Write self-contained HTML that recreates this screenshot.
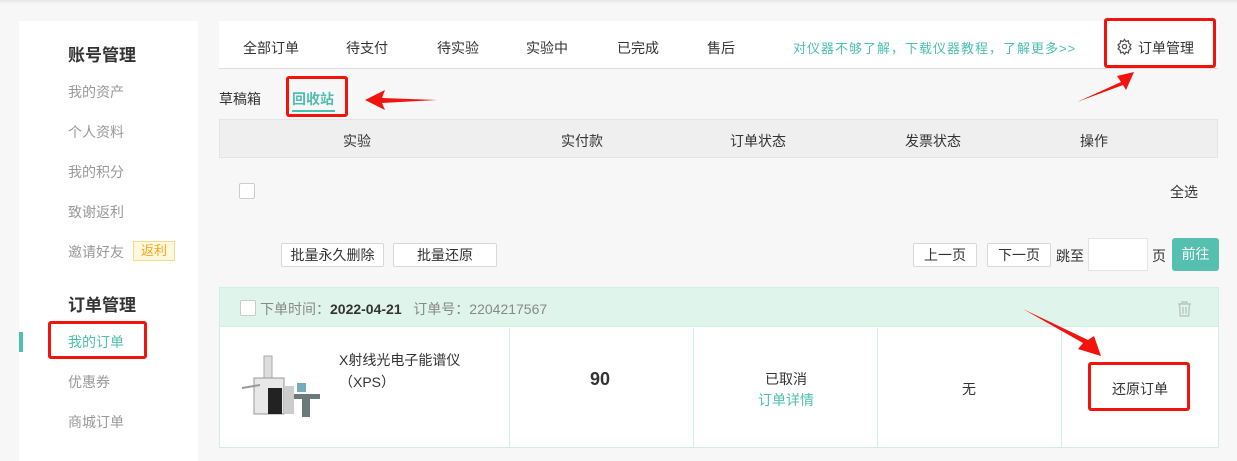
<!DOCTYPE html>
<html><head><meta charset="utf-8"><style>
*{margin:0;padding:0;box-sizing:border-box}
body{width:1237px;height:456px;overflow:hidden;background:#f7f7f7;font-family:"Liberation Sans","Noto Sans CJK SC",sans-serif;font-size:14px;color:#333;position:relative}
.a{position:absolute;white-space:nowrap}
.side{left:19px;top:21px;width:179px;height:440px;background:#fff}
.s{color:#999;font-size:14px;left:68px}
.h{font-size:17px;font-weight:bold;color:#333;left:68px}
.nav{left:219px;top:21px;width:999px;height:48px;background:#fff;border-bottom:1px solid #ddd}
.t{top:38px;font-size:14px;color:#333}
.teal{color:#4dbfb0}
.btn{border:1px solid #d8d8d8;background:#fff;border-radius:2px;text-align:center;font-size:14px;color:#333;line-height:22px;height:24px}
.red{border:3px solid #f2130d;border-radius:3px}
</style></head><body>
<div class="a" style="left:0;top:0;width:1237px;height:4px;background:linear-gradient(#e6e6e6,#f7f7f7)"></div>
<div class="a side"></div>
<div class="a h" style="top:41px">账号管理</div>
<div class="a s" style="top:82px">我的资产</div>
<div class="a s" style="top:122px">个人资料</div>
<div class="a s" style="top:162px">我的积分</div>
<div class="a s" style="top:202px">致谢返利</div>
<div class="a s" style="top:242px">邀请好友</div>
<div class="a" style="left:133px;top:241px;width:42px;height:20px;background:#fff8dc;border:1px solid #f5dc8a;color:#f5a623;font-size:13px;text-align:center;line-height:18px">返利</div>
<div class="a h" style="top:291px">订单管理</div>
<div class="a" style="left:19px;top:332px;width:4px;height:20px;background:#4dbfb0"></div>
<div class="a s teal" style="top:332px;color:#4dbfb0">我的订单</div>
<div class="a s" style="top:372px">优惠券</div>
<div class="a s" style="top:412px">商城订单</div>

<div class="a nav"></div>
<div class="a t" style="left:243px">全部订单</div>
<div class="a t" style="left:346px">待支付</div>
<div class="a t" style="left:437px">待实验</div>
<div class="a t" style="left:526px">实验中</div>
<div class="a t" style="left:617px">已完成</div>
<div class="a t" style="left:707px">售后</div>
<div class="a t teal" style="left:793px;font-size:13px;top:38px;letter-spacing:1px">对仪器不够了解，下载仪器教程，了解更多&gt;&gt;</div>
<svg class="a" style="left:1116px;top:38px" width="17" height="17" viewBox="0 0 24 24" fill="none" stroke="#555" stroke-width="1.8"><circle cx="12" cy="12" r="3"/><path d="M12 2l2 3 3.5-1 .5 3.5 3 2-2 3 2 3-3 2-.5 3.5-3.5-1-2 3-2-3-3.5 1-.5-3.5-3-2 2-3-2-3 3-2 .5-3.5 3.5 1z"/></svg>
<div class="a t" style="left:1138px">订单管理</div>

<div class="a" style="left:219px;top:89px;font-size:14px">草稿箱</div>
<div class="a teal" style="left:292px;top:89px;font-weight:bold">回收站</div>
<div class="a" style="left:292px;top:110px;width:43px;height:2px;background:#4dbfb0"></div>

<div class="a" style="left:219px;top:119px;width:999px;height:39px;background:#efefef;border:1px solid #e4e4e4"></div>
<div class="a" style="left:343px;top:131px">实验</div>
<div class="a" style="left:561px;top:131px">实付款</div>
<div class="a" style="left:730px;top:131px">订单状态</div>
<div class="a" style="left:905px;top:131px">发票状态</div>
<div class="a" style="left:1080px;top:131px">操作</div>

<div class="a" style="left:239px;top:183px;width:16px;height:16px;border:1px solid #ccc;background:#fff;border-radius:2px"></div>
<div class="a" style="left:1170px;top:182px">全选</div>

<div class="a btn" style="left:281px;top:243px;width:103px">批量永久删除</div>
<div class="a btn" style="left:393px;top:243px;width:104px">批量还原</div>
<div class="a btn" style="left:913px;top:243px;width:64px">上一页</div>
<div class="a btn" style="left:987px;top:243px;width:64px">下一页</div>
<div class="a" style="left:1056px;top:246px">跳至</div>
<div class="a" style="left:1088px;top:238px;width:60px;height:33px;background:#fff;border:1px solid #e4e4e4"></div>
<div class="a" style="left:1152px;top:246px">页</div>
<div class="a" style="left:1172px;top:238px;width:47px;height:33px;background:#55bfb0;color:#fff;text-align:center;line-height:33px;border-radius:3px">前往</div>

<div class="a" style="left:219px;top:287px;width:1000px;height:161px;border:1px solid #cfeee4;background:#fff"></div>
<div class="a" style="left:220px;top:288px;width:998px;height:39px;background:#dff4eb;border-bottom:1px solid #cfeee4"></div>
<div class="a" style="left:240px;top:300px;width:16px;height:16px;border:1px solid #ccc;background:#fff;border-radius:2px"></div>
<div class="a" style="left:260px;top:299px;color:#888">下单时间：<b style="color:#333">2022-04-21</b>&nbsp;&nbsp;&nbsp;订单号：2204217567</div>
<svg class="a" style="left:1177px;top:301px" width="15" height="16" viewBox="0 0 15 16" fill="none" stroke="#b8c8c0" stroke-width="1.4"><path d="M1 3h13M5 3V1h5v2M2.5 3l.8 12h8.4l.8-12M6 6v7M9 6v7"/></svg>
<div class="a" style="left:509px;top:328px;width:1px;height:119px;background:#cfeee4"></div>
<div class="a" style="left:693px;top:328px;width:1px;height:119px;background:#cfeee4"></div>
<div class="a" style="left:877px;top:328px;width:1px;height:119px;background:#cfeee4"></div>
<div class="a" style="left:1061px;top:328px;width:1px;height:119px;background:#cfeee4"></div>
<svg class="a" style="left:240px;top:350px" width="80" height="70" viewBox="0 0 80 70"><rect x="24" y="6" width="8" height="22" fill="#ddd" stroke="#aaa"/><rect x="14" y="28" width="30" height="36" fill="#e8e8e8" stroke="#999"/><rect x="28" y="38" width="14" height="26" fill="#222"/><line x1="2" y1="38" x2="20" y2="35" stroke="#999" stroke-width="2"/><rect x="57" y="33" width="9" height="9" fill="#7ab"/><rect x="52" y="44" width="28" height="5" fill="#6a7a78"/><rect x="62" y="49" width="8" height="18" fill="#6a7a78"/><rect x="44" y="36" width="10" height="28" fill="#ccc"/></svg>
<div class="a" style="left:339px;top:350px;font-size:14px">X射线光电子能谱仪</div>
<div class="a" style="left:339px;top:372px;font-size:14px">（XPS）</div>
<div class="a" style="left:590px;top:369px;font-size:18px;font-weight:bold">90</div>
<div class="a" style="left:765px;top:369px">已取消</div>
<div class="a teal" style="left:758px;top:390px">订单详情</div>
<div class="a" style="left:962px;top:379px">无</div>
<div class="a" style="left:1112px;top:379px">还原订单</div>

<div class="a red" style="left:286px;top:76px;width:62px;height:41px"></div>
<div class="a red" style="left:1104px;top:18px;width:112px;height:50px"></div>
<div class="a red" style="left:48px;top:321px;width:99px;height:38px"></div>
<div class="a red" style="left:1088px;top:362px;width:102px;height:49px"></div>
<svg class="a" style="left:0;top:0" width="1237" height="456">
<g fill="#f2130d"><polygon points="365,100 385,90 382,98 437,100 382,103 385,110"/>
<polygon points="1077,102 1121,82 1117,76 1134,72 1126,90 1123,85"/>
<polygon points="1023,309 1083,343 1078,349 1101,356 1094,336 1088,340"/></g></svg>
</body></html>
